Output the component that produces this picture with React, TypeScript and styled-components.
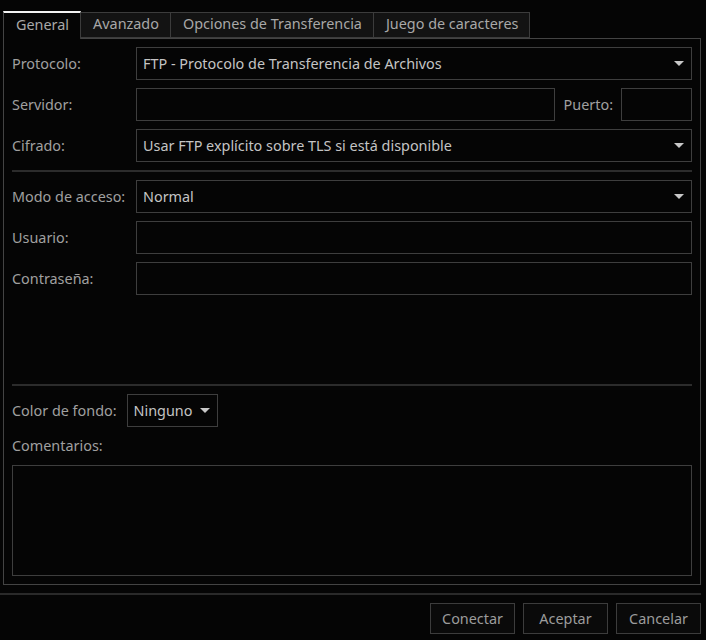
import styled, { createGlobalStyle } from "styled-components"

const GlobalStyle = createGlobalStyle`
    html, body {
        margin: 0;
        padding: 0;
        background: #050505;
    }
    body {
        font-family: "Noto Sans", "Open Sans", sans-serif;
        font-size: 14.4px;
        color: #a8a8a8;
    }
`

const Window = styled.div`
    display: flex;
    flex-direction: column;
    width: 706px;
    height: 640px;
    box-sizing: border-box;
    padding: 11px 5px 6px 3px;
`
const TabBar = styled.div`
    display: flex;
    align-items: flex-end;
    height: 27px;
`
const Tab = styled.div<{ $active?: boolean }>`
    box-sizing: border-box;
    height: ${p => p.$active ? "28px" : "26px"};
    margin-bottom: ${p => p.$active ? "-1px" : "0"};
    padding: 0 11px 1px 12px;
    display: flex;
    align-items: center;
    line-height: 1;
    color: #a8a8a8;
    background: ${p => p.$active ? "#050505" : "#131313"};
    border: 1px solid #3c3c3c;
    border-left: ${p => p.$active ? "1px solid #444" : "none"};
    border-top: ${p => p.$active ? "2px solid #f2f2f2" : "1px solid #3c3c3c"};
    border-bottom: ${p => p.$active ? "none" : "1px solid #3c3c3c"};
    position: relative;
    z-index: ${p => p.$active ? 1 : 0};
`
const Pane = styled.div`
    flex: 1;
    display: flex;
    flex-direction: column;
    gap: 8px;
    box-sizing: border-box;
    border: 1px solid #444;
    padding: 8px;
`
const FormGrid = styled.div`
    display: grid;
    grid-template-columns: 124px 1fr;
    row-gap: 8px;
    align-items: center;
`
const Label = styled.label`
    color: #a0a0a0;
    white-space: nowrap;
    padding-bottom: 1px;
`
const Field = styled.div`
    box-sizing: border-box;
    height: 33px;
    border: 1px solid #3e3e3e;
    background: #050505;
    display: flex;
    align-items: center;
    padding: 0 6px 1px;
    color: #c4c4c4;
`
const Combo = styled(Field)<{ $compact?: boolean }>`
    justify-content: space-between;
    gap: 8px;
    ${p => p.$compact && "width: 91px; padding-right: 7px;"}
`
const Arrow = styled.span`
    width: 0;
    height: 0;
    border-left: 5px solid transparent;
    border-right: 5px solid transparent;
    border-top: 5px solid #c8c8c8;
    margin: 1px 1px 0 0;
`
const ServerRow = styled.div`
    display: flex;
    align-items: center;
`
const Grow = styled(Field)`
    flex: 1;
`
const PortLabel = styled(Label)`
    margin: 0 8px 0 9px;
`
const PortField = styled(Field)`
    width: 71px;
`
const Separator = styled.div`
    grid-column: 1 / -1;
    height: 2px;
    background: #2c2c2c;
`
const Spacer = styled.div`
    flex: 1;
`
const ColorRow = styled.div`
    display: flex;
    align-items: center;
    gap: 10px;
`
const PlainLabel = styled(Label)`
    line-height: 21px;
`
const Comments = styled.div`
    box-sizing: border-box;
    height: 111px;
    border: 1px solid #3e3e3e;
`
const Footer = styled.div`
    margin: 8px 0 0 -3px;
    border-top: 2px solid #2a2a2a;
    padding-top: 8px;
    display: flex;
    justify-content: flex-end;
    gap: 8px;
`
const Button = styled.button`
    box-sizing: border-box;
    height: 31px;
    min-width: 85px;
    padding: 0 10px 1px;
    background: #0a0a0a;
    border: 1px solid #3c3c3c;
    color: #9c9c9c;
    font-family: inherit;
    font-size: 14.4px;
`

const tabs = ["General", "Avanzado", "Opciones de Transferencia", "Juego de caracteres"]

export default function App() {
    return (
        <Window>
            <GlobalStyle />
            <TabBar>
                {tabs.map((t, i) => <Tab key={t} $active={i === 0}>{t}</Tab>)}
            </TabBar>
            <Pane>
                <FormGrid>
                    <Label>Protocolo:</Label>
                    <Combo>FTP - Protocolo de Transferencia de Archivos<Arrow /></Combo>
                    <Label>Servidor:</Label>
                    <ServerRow>
                        <Grow />
                        <PortLabel>Puerto:</PortLabel>
                        <PortField />
                    </ServerRow>
                    <Label>Cifrado:</Label>
                    <Combo>Usar FTP explícito sobre TLS si está disponible<Arrow /></Combo>
                    <Separator />
                    <Label>Modo de acceso:</Label>
                    <Combo>Normal<Arrow /></Combo>
                    <Label>Usuario:</Label>
                    <Field />
                    <Label>Contraseña:</Label>
                    <Field />
                </FormGrid>
                <Spacer />
                <Separator />
                <ColorRow>
                    <Label>Color de fondo:</Label>
                    <Combo $compact>Ninguno<Arrow /></Combo>
                </ColorRow>
                <PlainLabel>Comentarios:</PlainLabel>
                <Comments />
            </Pane>
            <Footer>
                <Button>Conectar</Button>
                <Button>Aceptar</Button>
                <Button>Cancelar</Button>
            </Footer>
        </Window>
    )
}
